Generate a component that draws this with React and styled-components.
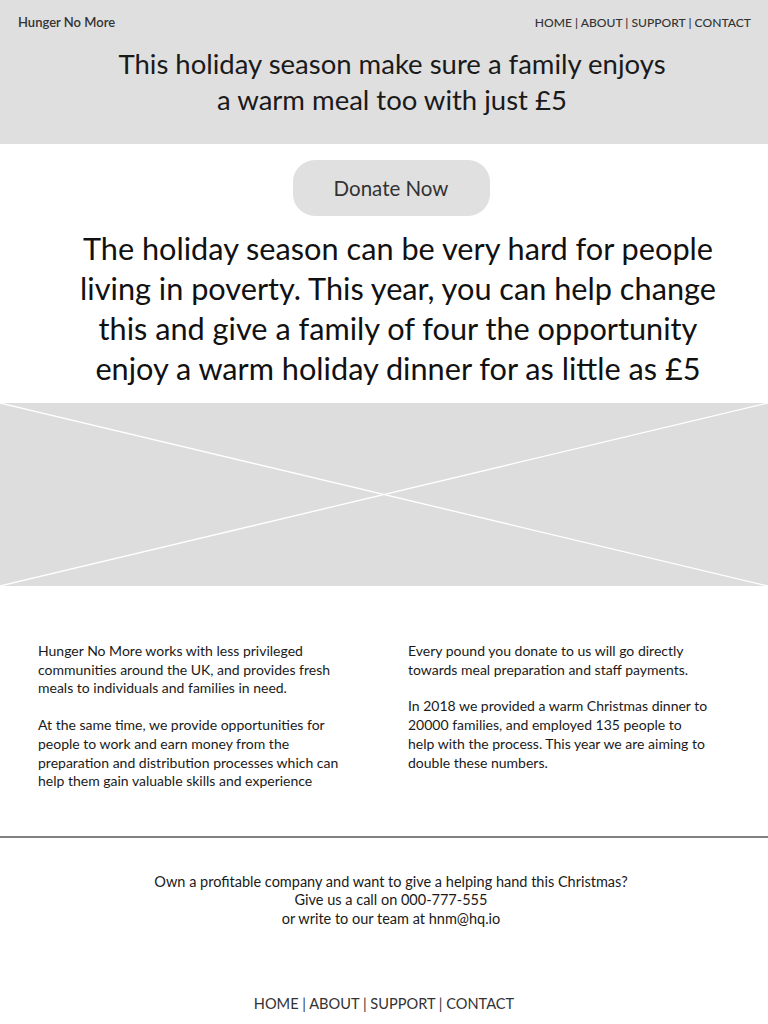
import React from "react";
import styled, { createGlobalStyle } from "styled-components";

const Global = createGlobalStyle`
  html, body { margin: 0; padding: 0; background: #fff; }
  body { font-family: Lato, "Open Sans", sans-serif; color: #1a1a1a; }
  * { box-sizing: border-box; }
`;

const Page = styled.div`
  width: 768px;
  display: flex;
  flex-direction: column;
`;

const Header = styled.header`
  background: #dfdfdf;
  padding: 14px 17px 26px 18px;
  display: flex;
  flex-direction: column;
  gap: 16px;
`;

const TopBar = styled.div`
  display: flex;
  justify-content: space-between;
  align-items: center;
  height: 16px;
`;

const Brand = styled.div`
  font-size: 13px;
  font-weight: 600;
  color: #333;
`;

const Nav = styled.nav`
  font-size: ${(p) => p.$size || 13}px;
  color: #333;
  font-weight: ${(p) => p.$weight || 600};
  white-space: nowrap;
`;

const Headline = styled.h1`
  margin: 0;
  padding-left: 15px;
  font-size: 27.5px;
  line-height: 36px;
  font-weight: 400;
  text-align: center;
  color: #1a1a1a;
`;

const Hero = styled.section`
  display: flex;
  flex-direction: column;
  align-items: center;
  padding: 16px 0 14px;
  gap: 13px;
`;

const DonateButton = styled.button`
  width: 197px;
  height: 56px;
  margin-left: 14px;
  border: none;
  border-radius: 22px;
  background: #e0e0e0;
  font-family: inherit;
  font-size: 20.5px;
  color: #333;
  cursor: pointer;
`;

const Lead = styled.p`
  margin: 0;
  padding-left: 28px;
  font-size: 30.7px;
  line-height: 40px;
  text-align: center;
  color: #111;
`;

const ImagePlaceholder = styled.div`
  height: 183px;
  background: #dddddd;
  svg { display: block; width: 100%; height: 100%; }
`;

const Columns = styled.section`
  display: grid;
  grid-template-columns: 1fr 1fr;
  column-gap: 30px;
  padding: 56px 20px 45px 38px;
`;

const Column = styled.div`
  display: flex;
  flex-direction: column;
  gap: 18px;
`;

const Body = styled.p`
  margin: 0;
  font-size: 14px;
  line-height: 18.7px;
  color: #1a1a1a;
`;

const Rule = styled.hr`
  margin: 0;
  border: none;
  border-top: 2px solid #808080;
`;

const Footer = styled.footer`
  display: flex;
  flex-direction: column;
  align-items: center;
  padding: 35px 0 12px;
  gap: 67px;
`;

const Contact = styled.p`
  margin: 0;
  padding-left: 14px;
  font-size: 14.5px;
  line-height: 18.5px;
  text-align: center;
  color: #1a1a1a;
`;

export default function App() {
  return (
    <Page>
      <Global />
      <Header>
        <TopBar>
          <Brand>Hunger No More</Brand>
          <Nav $size={12.1} $weight={500}>HOME | ABOUT | SUPPORT | CONTACT</Nav>
        </TopBar>
        <Headline>
          This holiday season make sure a family enjoys
          <br />a warm meal too with just £5
        </Headline>
      </Header>
      <Hero>
        <DonateButton>Donate Now</DonateButton>
        <Lead>
          The holiday season can be very hard for people
          <br />
          living in poverty. This year, you can help change
          <br />
          this and give a family of four the opportunity
          <br />
          enjoy a warm holiday dinner for as little as £5
        </Lead>
      </Hero>
      <ImagePlaceholder>
        <svg viewBox="0 0 768 183" preserveAspectRatio="none">
          <line x1="0" y1="0" x2="768" y2="183" stroke="#fff" strokeWidth="1.3" />
          <line x1="0" y1="183" x2="768" y2="0" stroke="#fff" strokeWidth="1.3" />
        </svg>
      </ImagePlaceholder>
      <Columns>
        <Column>
          <Body>
            Hunger No More works with less privileged
            <br />
            communities around the UK, and provides fresh
            <br />
            meals to individuals and families in need.
          </Body>
          <Body>
            At the same time, we provide opportunities for
            <br />
            people to work and earn money from the
            <br />
            preparation and distribution processes which can
            <br />
            help them gain valuable skills and experience
          </Body>
        </Column>
        <Column>
          <Body>
            Every pound you donate to us will go directly
            <br />
            towards meal preparation and staff payments.
          </Body>
          <Body>
            In 2018 we provided a warm Christmas dinner to
            <br />
            20000 families, and employed 135 people to
            <br />
            help with the process. This year we are aiming to
            <br />
            double these numbers.
          </Body>
        </Column>
      </Columns>
      <Rule />
      <Footer>
        <Contact>
          Own a profitable company and want to give a helping hand this Christmas?
          <br />
          Give us a call on 000-777-555
          <br />
          or write to our team at hnm@hq.io
        </Contact>
        <Nav $size={14.6} $weight={400}>HOME | ABOUT | SUPPORT | CONTACT</Nav>
      </Footer>
    </Page>
  );
}
